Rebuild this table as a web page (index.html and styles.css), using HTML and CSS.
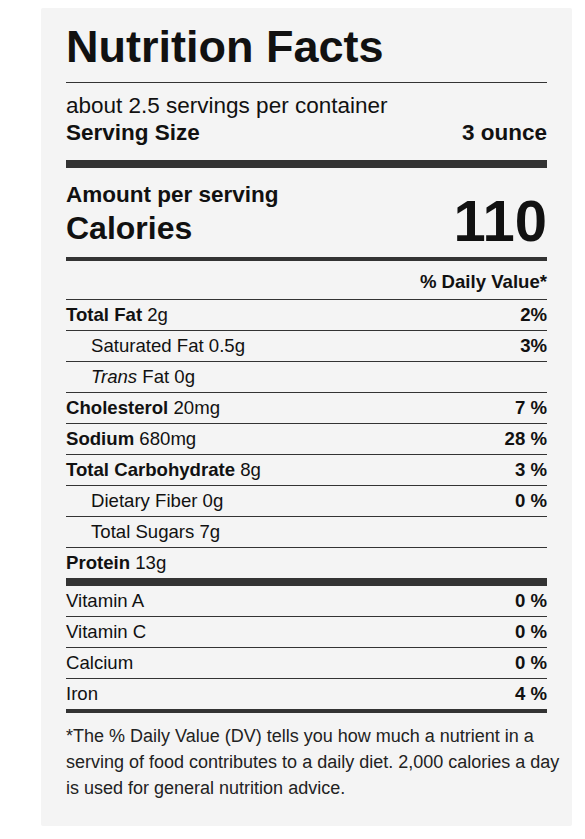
FILE: index.html
```html
<!DOCTYPE html>
<html lang="en">
<head>
<meta charset="utf-8">
<title>Nutrition Facts</title>
<link rel="stylesheet" href="styles.css">
</head>
<body>
<section class="label">
  <h1 class="title">Nutrition Facts</h1>
  <div class="servings">
    <p class="servings-count">about 2.5 servings per container</p>
    <p class="serving-size"><span>Serving Size</span><span>3 ounce</span></p>
  </div>
  <div class="calories">
    <div class="calories-left">
      <p class="amount">Amount per serving</p>
      <p class="cal-label">Calories</p>
    </div>
    <p class="cal-value">110</p>
  </div>
  <p class="dv-head">% Daily Value*</p>
  <ul class="rows">
    <li class="row"><span><b>Total Fat</b> 2g</span><b>2%</b></li>
    <li class="row sub"><span>Saturated Fat 0.5g</span><b>3%</b></li>
    <li class="row sub"><span><i>Trans</i> Fat 0g</span></li>
    <li class="row"><span><b>Cholesterol</b> 20mg</span><b>7 %</b></li>
    <li class="row"><span><b>Sodium</b> 680mg</span><b>28 %</b></li>
    <li class="row"><span><b>Total Carbohydrate</b> 8g</span><b>3 %</b></li>
    <li class="row sub"><span>Dietary Fiber 0g</span><b>0 %</b></li>
    <li class="row sub"><span>Total Sugars 7g</span></li>
    <li class="row"><span><b>Protein</b> 13g</span></li>
  </ul>
  <ul class="rows vitamins">
    <li class="row"><span>Vitamin A</span><b>0 %</b></li>
    <li class="row"><span>Vitamin C</span><b>0 %</b></li>
    <li class="row"><span>Calcium</span><b>0 %</b></li>
    <li class="row"><span>Iron</span><b>4 %</b></li>
  </ul>
  <p class="footnote">*The % Daily Value (DV) tells you how much a nutrient in a serving of food contributes to a daily diet. 2,000 calories a day is used for general nutrition advice.</p>
</section>
</body>
</html>
```
FILE: styles.css
```css
* { box-sizing: border-box; }
html, body { margin: 0; padding: 0; background: #fff; }
body {
  font-family: "Liberation Sans", Arial, sans-serif;
  color: #111;
}
p { margin: 0; }
.label {
  margin: 8px 0 0 41px;
  width: 531px;
  background: #f4f4f4;
  border-radius: 2px;
  padding: 16px 25px 25px 25px;
}
.title {
  margin: 0;
  font-size: 45px;
  line-height: 45px;
  font-weight: 700;
  padding-bottom: 13px;
  border-bottom: 1px solid #333;
}
.servings {
  padding-top: 9px;
  padding-bottom: 14px;
  border-bottom: 8px solid #333;
  font-size: 22.5px;
  line-height: 27px;
}
.serving-size {
  display: flex;
  justify-content: space-between;
  font-weight: 700;
}
.calories {
  display: flex;
  justify-content: space-between;
  align-items: flex-end;
  padding-top: 14px;
  padding-bottom: 9px;
  border-bottom: 4px solid #333;
  font-weight: 700;
}
.amount { font-size: 22.5px; line-height: 26px; }
.cal-label { font-size: 32px; line-height: 40px; }
.cal-value { font-size: 58px; line-height: 54px; }
.dv-head {
  text-align: right;
  font-weight: 700;
  font-size: 18.6px;
  line-height: 20px;
  padding-top: 11px;
  padding-bottom: 7px;
}
.rows {
  list-style: none;
  margin: 0;
  padding: 0;
  font-size: 18.6px;
  line-height: 30px;
}
.row {
  display: flex;
  justify-content: space-between;
  border-top: 1px solid #333;
}
.row.sub { padding-left: 25px; }
.vitamins {
  border-top: 8px solid #333;
  border-bottom: 4px solid #333;
}
.vitamins .row:first-child { border-top: 0; }
.footnote {
  margin-right: -25px;
  padding-top: 10px;
  font-size: 18px;
  line-height: 26px;
  color: #222;
}
```
